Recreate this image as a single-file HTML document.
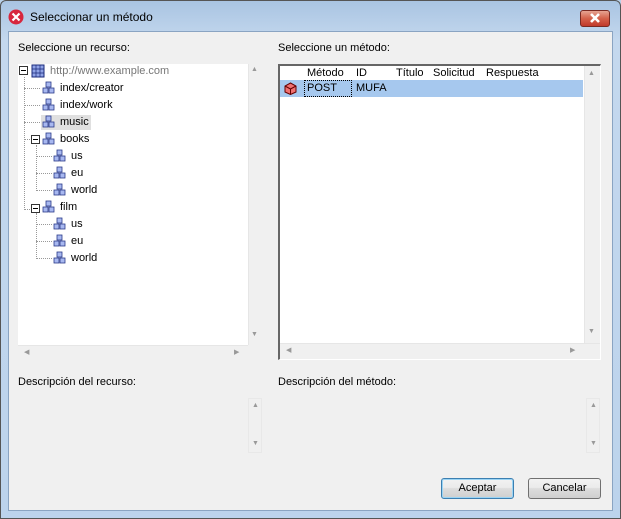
<!DOCTYPE html>
<html><head><meta charset="utf-8"><style>
*{margin:0;padding:0;box-sizing:border-box}
body{width:621px;height:519px;overflow:hidden;font-family:"Liberation Sans","DejaVu Sans",sans-serif;font-size:11px;color:#000;background:#b9d1ea;position:relative}
.a{position:absolute}
.win{left:0;top:0;width:621px;height:519px;background:linear-gradient(#a9c4e2,#c4d8ee 40px,#bcd3ec);border:1px solid #555;border-radius:6px 6px 0 0}
.client{left:8px;top:31px;width:605px;height:480px;background:#f0f0f0;border:1px solid #8aa4c2}
.t{white-space:nowrap}
.sb{background:#f0f0f0;}
.arr{color:#999;font-size:7px}
.btn{height:21px;border:1px solid #707070;border-radius:3px;background:linear-gradient(#f2f2f2,#ebebeb 45%,#dddddd 50%,#cfcfcf);text-align:center;line-height:19px;font-size:11px}
.dot{border-color:#999;border-style:dotted;border-width:0}
</style></head><body>
<div class="a win"></div>
<svg class="a" style="left:8px;top:9px" width="16" height="16"><circle cx="8" cy="8" r="7.5" fill="#d7263d"/><path d="M4.5 4.5L11.5 11.5M11.5 4.5L4.5 11.5" stroke="#fff" stroke-width="2.2"/></svg>
<div class="a t" style="left:30px;top:10px;font-size:12px">Seleccionar un método</div>
<div class="a" style="left:580px;top:10px;width:30px;height:17px;border:1px solid #7a2a22;border-radius:3px;background:linear-gradient(#e6a493,#d4614a 50%,#c0392b);"></div>
<svg class="a" style="left:588px;top:12px" width="14" height="12"><path d="M3 2L11 10M11 2L3 10" stroke="#fff" stroke-width="2.6"/></svg>
<div class="a client"></div>

<div class="a t" style="left:18px;top:42px">Seleccione un recurso:</div>
<div class="a t" style="left:278px;top:42px">Seleccione un método:</div>

<div class="a" style="left:18px;top:64px;width:230px;height:281px;background:#fff"></div>
<div class="a sb" style="left:248px;top:64px;width:14px;height:281px;border-left:1px solid #e6e6e6"></div>
<div class="a arr" style="left:251px;top:66px">▲</div>
<div class="a arr" style="left:251px;top:331px">▼</div>
<div class="a sb" style="left:18px;top:345px;width:230px;height:15px;border-top:1px solid #e6e6e6"></div>
<div class="a arr" style="left:24px;top:348px">◀</div>
<div class="a arr" style="left:234px;top:348px">▶</div>

<div class="a dot" style="left:24px;top:77px;height:133px;border-left-width:1px"></div>
<div class="a dot" style="left:24px;top:88px;width:16px;border-top-width:1px"></div>
<div class="a dot" style="left:24px;top:105px;width:16px;border-top-width:1px"></div>
<div class="a dot" style="left:24px;top:122px;width:16px;border-top-width:1px"></div>
<div class="a dot" style="left:24px;top:139px;width:8px;border-top-width:1px"></div>
<div class="a dot" style="left:24px;top:209px;width:8px;border-top-width:1px"></div>
<div class="a dot" style="left:36px;top:145px;height:46px;border-left-width:1px"></div>
<div class="a dot" style="left:36px;top:156px;width:16px;border-top-width:1px"></div>
<div class="a dot" style="left:36px;top:173px;width:16px;border-top-width:1px"></div>
<div class="a dot" style="left:36px;top:190px;width:16px;border-top-width:1px"></div>
<div class="a dot" style="left:36px;top:213px;height:46px;border-left-width:1px"></div>
<div class="a dot" style="left:36px;top:224px;width:16px;border-top-width:1px"></div>
<div class="a dot" style="left:36px;top:241px;width:16px;border-top-width:1px"></div>
<div class="a dot" style="left:36px;top:258px;width:16px;border-top-width:1px"></div>

<svg width="0" height="0" style="position:absolute"><defs>
<g id="cu"><rect x="4" y="1" width="5" height="5" fill="#a8b8f0" stroke="#2a3a8a" stroke-width=".8"/><rect x="1" y="7" width="5" height="5" fill="#a8b8f0" stroke="#2a3a8a" stroke-width=".8"/><rect x="7" y="7" width="5" height="5" fill="#a8b8f0" stroke="#2a3a8a" stroke-width=".8"/></g>
<g id="mn"><rect x="0.5" y="0.5" width="8" height="8" fill="#fff" stroke="#333"/><path d="M2 4.5H7" stroke="#000"/></g>
</defs></svg>

<svg class="a" style="left:19px;top:66px" width="9" height="9"><use href="#mn"/></svg>
<svg class="a" style="left:31px;top:64px" width="14" height="14"><rect x="1" y="1" width="12" height="12" fill="#8fa2e6" stroke="#1a2a7a"/><path d="M5 1V13M9 1V13M1 5H13M1 9H13" stroke="#1a2a7a" stroke-width=".7"/></svg>
<div class="a t" style="left:50px;top:65px;color:#777">http://www.example.com</div>

<svg class="a" style="left:42px;top:81px" width="14" height="14"><use href="#cu"/></svg>
<div class="a t" style="left:60px;top:82px">index/creator</div>
<svg class="a" style="left:42px;top:98px" width="14" height="14"><use href="#cu"/></svg>
<div class="a t" style="left:60px;top:99px">index/work</div>
<div class="a" style="left:41px;top:115px;width:50px;height:15px;background:#e0e0e0"></div>
<svg class="a" style="left:42px;top:115px" width="14" height="14"><use href="#cu"/></svg>
<div class="a t" style="left:60px;top:116px">music</div>

<svg class="a" style="left:31px;top:135px" width="9" height="9"><use href="#mn"/></svg>
<svg class="a" style="left:42px;top:132px" width="14" height="14"><use href="#cu"/></svg>
<div class="a t" style="left:60px;top:133px">books</div>
<svg class="a" style="left:53px;top:149px" width="14" height="14"><use href="#cu"/></svg>
<div class="a t" style="left:71px;top:150px">us</div>
<svg class="a" style="left:53px;top:166px" width="14" height="14"><use href="#cu"/></svg>
<div class="a t" style="left:71px;top:167px">eu</div>
<svg class="a" style="left:53px;top:183px" width="14" height="14"><use href="#cu"/></svg>
<div class="a t" style="left:71px;top:184px">world</div>

<svg class="a" style="left:31px;top:204px" width="9" height="9"><use href="#mn"/></svg>
<svg class="a" style="left:42px;top:200px" width="14" height="14"><use href="#cu"/></svg>
<div class="a t" style="left:60px;top:201px">film</div>
<svg class="a" style="left:53px;top:217px" width="14" height="14"><use href="#cu"/></svg>
<div class="a t" style="left:71px;top:218px">us</div>
<svg class="a" style="left:53px;top:234px" width="14" height="14"><use href="#cu"/></svg>
<div class="a t" style="left:71px;top:235px">eu</div>
<svg class="a" style="left:53px;top:251px" width="14" height="14"><use href="#cu"/></svg>
<div class="a t" style="left:71px;top:252px">world</div>

<div class="a" style="left:278px;top:64px;width:323px;height:296px;border:1px solid #fff;border-top-color:#666;border-left-color:#666;border-left-width:2px;border-top-width:2px;background:#fff"></div>
<div class="a sb" style="left:584px;top:66px;width:16px;height:277px;border-left:1px solid #e6e6e6"></div>
<div class="a arr" style="left:588px;top:70px">▲</div>
<div class="a arr" style="left:588px;top:328px">▼</div>
<div class="a sb" style="left:280px;top:343px;width:320px;height:16px;border-top:1px solid #e6e6e6"></div>
<div class="a arr" style="left:286px;top:346px">◀</div>
<div class="a arr" style="left:570px;top:346px">▶</div>
<div class="a t" style="left:307px;top:67px">Método</div>
<div class="a t" style="left:356px;top:67px">ID</div>
<div class="a t" style="left:396px;top:67px">Título</div>
<div class="a t" style="left:433px;top:67px">Solicitud</div>
<div class="a t" style="left:486px;top:67px">Respuesta</div>
<div class="a" style="left:280px;top:80px;width:303px;height:17px;background:#a6c8ee"></div>
<svg class="a" style="left:284px;top:82px" width="13" height="13"><path d="M6.5 1L12 4V10L6.5 12.5L1 10V4Z" fill="#f07070" stroke="#600"/><path d="M1 4L6.5 7L12 4M6.5 7V12.5" stroke="#600" fill="none"/></svg>
<div class="a" style="left:304px;top:80px;width:48px;height:17px;border:1px dotted #000"></div>
<div class="a t" style="left:307px;top:82px">POST</div>
<div class="a t" style="left:356px;top:82px">MUFA</div>

<div class="a t" style="left:18px;top:376px">Descripción del recurso:</div>
<div class="a t" style="left:278px;top:376px">Descripción del método:</div>
<div class="a sb" style="left:248px;top:398px;width:14px;height:55px;border:1px solid #e8e8e8"></div>
<div class="a arr" style="left:252px;top:402px">▲</div>
<div class="a arr" style="left:252px;top:440px">▼</div>
<div class="a sb" style="left:586px;top:398px;width:14px;height:55px;border:1px solid #e8e8e8"></div>
<div class="a arr" style="left:590px;top:402px">▲</div>
<div class="a arr" style="left:590px;top:440px">▼</div>

<div class="a btn" style="left:441px;top:478px;width:73px;border-color:#3c7fb1;box-shadow:inset 0 0 0 1px #9bd4f4">Aceptar</div>
<div class="a btn" style="left:528px;top:478px;width:73px">Cancelar</div>
</body></html>
